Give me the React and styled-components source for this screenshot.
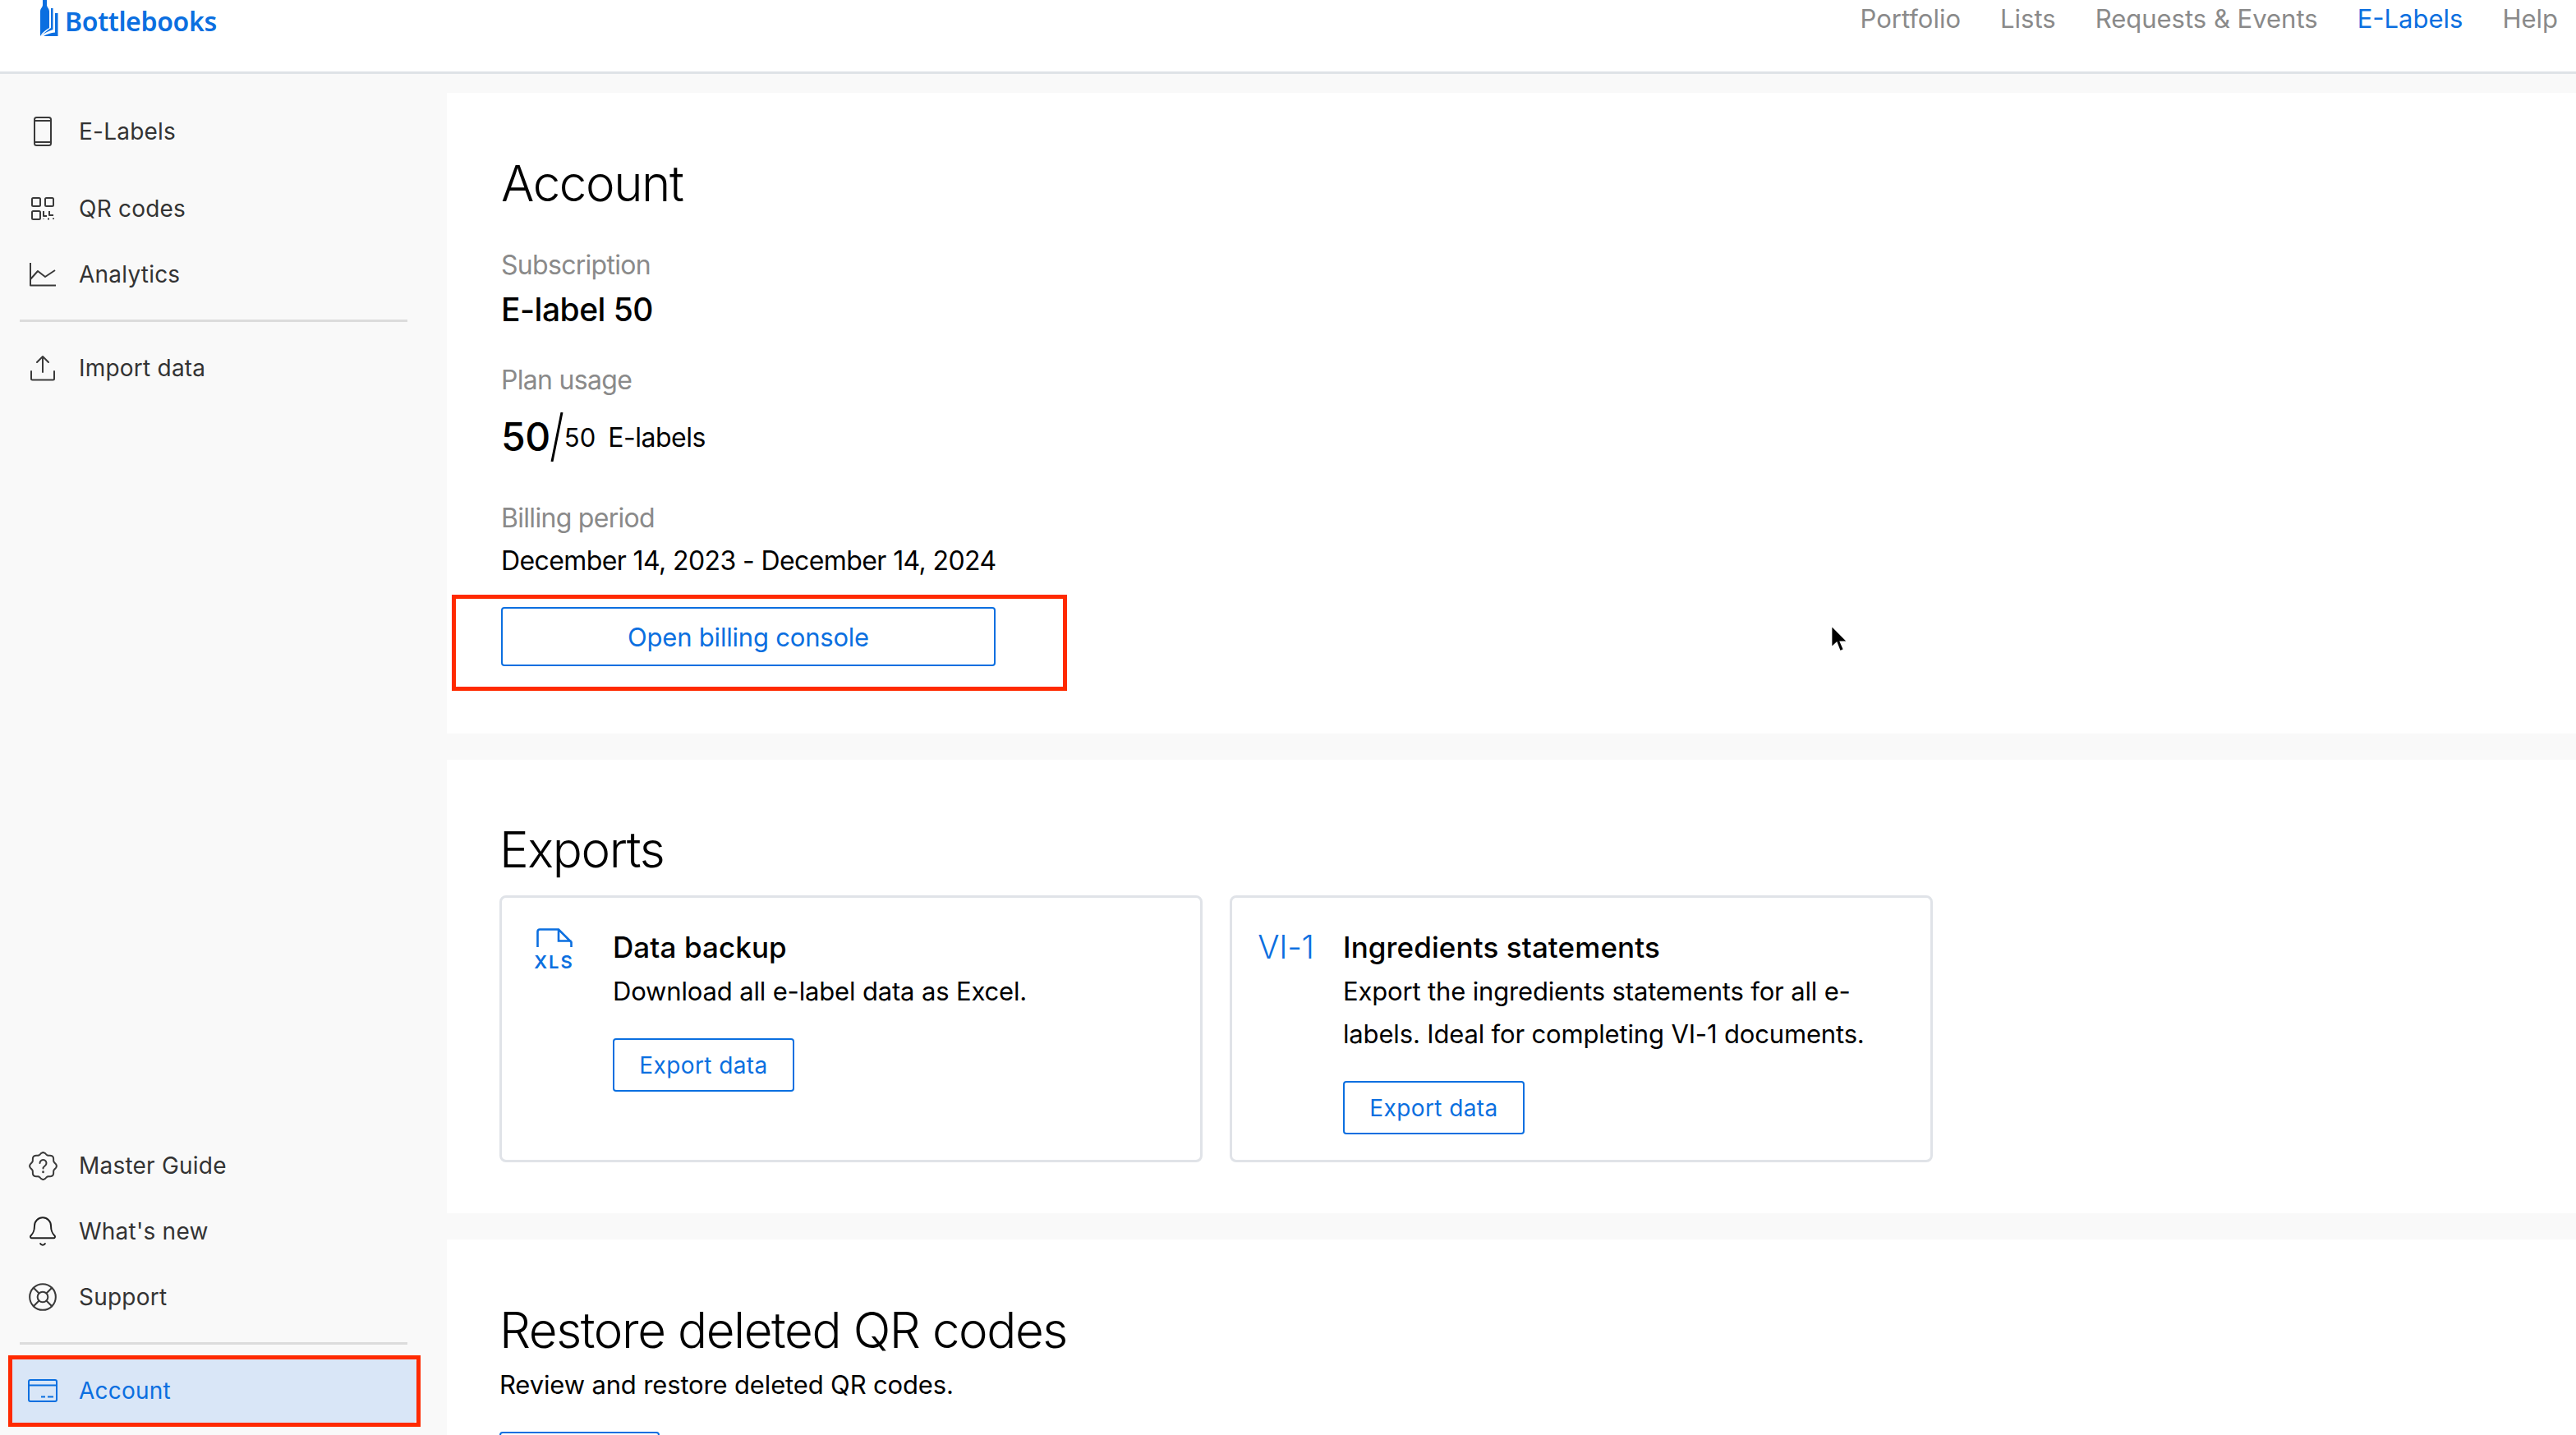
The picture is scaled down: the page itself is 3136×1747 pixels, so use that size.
import React from "react";
import styled, { createGlobalStyle } from "styled-components";
import { Bell, LifeBuoy } from "lucide-react";

const Global = createGlobalStyle`
  html, body { margin: 0; padding: 0; background: #f9f9f9; }
  body { font-family: Inter, "Liberation Sans", sans-serif; overflow: hidden; color: #000; }
  * { box-sizing: border-box; }
`;

const Page = styled.div`
  position: relative;
  width: 3136px;
  height: 1747px;
  overflow: hidden;
  display: flex;
  flex-direction: column;
`;
const Header = styled.header`
  height: 90px;
  flex: none;
  background: #fff;
  border-bottom: 3px solid #dfe3e7;
  display: flex;
  justify-content: space-between;
  align-items: flex-start;
  padding: 0 22px 0 49px;
`;
const Brand = styled.div`
  display: flex;
  align-items: flex-start;
  gap: 8px;
`;
const BrandName = styled.span`
  font-family: "Noto Sans", sans-serif;
  font-weight: 600;
  font-size: 32px;
  line-height: 52px;
  color: #0b6fe0;
  letter-spacing: -0.35px;
`;
const TopNav = styled.nav`
  display: flex;
  gap: 48px;
`;
const TopLink = styled.a`
  font-size: 31px;
  line-height: 46px;
  font-weight: 400;
  letter-spacing: 0;
  color: ${(p) => (p.$active ? "#0b6fe0" : "#8a8a8a")};
`;
const Body = styled.div`
  flex: 1;
  display: flex;
  min-height: 0;
`;
const Sidebar = styled.aside`
  width: 544px;
  flex: none;
  padding: 30px 36px 14px 12px;
  display: flex;
  flex-direction: column;
  justify-content: space-between;
`;
const NavGroup = styled.div`
  display: flex;
  flex-direction: column;
`;
const NavItem = styled.a`
  height: 80px;
  margin-bottom: ${(p) => p.$mb || 0}px;
  display: flex;
  align-items: center;
  gap: 27px;
  padding-left: 23px;
  font-size: 28px;
  letter-spacing: 0.22px;
  color: ${(p) => (p.$active ? "#0b6fe0" : "#333")};
  background: ${(p) => (p.$active ? "#d9e6f7" : "transparent")};
  border-radius: ${(p) => (p.$active ? "8px" : "0")};
`;
const IconBox = styled.span`
  width: 34px;
  height: 34px;
  flex: none;
  display: flex;
  align-items: center;
  justify-content: center;
  svg { display: block; flex: none; }
`;
const Divider = styled.hr`
  border: 0;
  height: 3px;
  background: #dcdcdc;
  margin: 15px 0 16px 12px;
  width: 472px;
  flex: none;
`;
const Main = styled.main`
  flex: 1;
  padding-top: 23px;
  display: flex;
  flex-direction: column;
  gap: 32px;
  min-width: 0;
`;
const Panel = styled.section`
  background: #fff;
  flex: none;
  height: ${(p) => p.$h}px;
  padding: ${(p) => p.$pt}px 0 0 ${(p) => p.$pl}px;
`;
const Title = styled.h2`
  margin: 0;
  font-weight: 300;
  font-size: 60px;
  line-height: 76px;
  letter-spacing: -1.4px;
  color: #000;
`;
const Label = styled.div`
  font-size: 32px;
  line-height: 40px;
  color: #8a8a8a;
  letter-spacing: -0.7px;
  margin-top: ${(p) => p.$mt}px;
`;
const PlanName = styled.div`
  font-size: 39px;
  line-height: 48px;
  font-weight: 500;
  margin-top: 10px;
  letter-spacing: -0.5px;
`;
const Usage = styled.div`
  display: flex;
  align-items: center;
  height: 72px;
  margin-top: 13px;
`;
const UsageBig = styled.span`
  font-size: 48px;
  font-weight: 500;
  line-height: 72px;
  letter-spacing: -0.4px;
`;
const Slash = styled.svg`
  margin: 0 0 0 -1px;
`;
const UsageSmall = styled.span`
  font-size: 31px;
  margin-left: 0;
`;
const UsageUnit = styled.span`
  font-size: 32px;
  margin-left: 15px;
  letter-spacing: -0.5px;
`;
const DateLine = styled.div`
  font-size: 32px;
  line-height: 40px;
  margin-top: 12px;
  letter-spacing: -0.6px;
`;
const OutlineButton = styled.button`
  display: block;
  width: ${(p) => p.$w}px;
  height: ${(p) => p.$h}px;
  margin-top: ${(p) => p.$mt}px;
  padding: 0;
  background: #fff;
  border: 2px solid #0b6fe0;
  border-radius: 4px;
  color: #0b6fe0;
  font-family: inherit;
  font-size: ${(p) => p.$fs}px;
  letter-spacing: ${(p) => p.$ls || 0}px;
`;
const CardRow = styled.div`
  display: flex;
  gap: 33px;
  margin-top: 18px;
`;
const ExportCard = styled.article`
  width: 856px;
  height: 325px;
  border: 3px solid #e0e3e8;
  border-radius: 8px;
  display: grid;
  grid-template-columns: 135px 1fr;
  padding: 37px 60px 0 0;
`;
const CardIcon = styled.div`
  display: flex;
  flex-direction: column;
  align-items: center;
  padding-right: ${(p) => p.$pr || 0}px;
`;
const XlsText = styled.span`
  font-size: 22px;
  line-height: 20px;
  font-weight: 600;
  letter-spacing: 2px;
  color: #0b6fe0;
  margin-top: 8px;
`;
const ViText = styled.span`
  font-size: 39px;
  line-height: 46px;
  font-weight: 300;
  letter-spacing: -0.3px;
  color: #0b6fe0;
`;
const CardTitle = styled.h3`
  margin: 0;
  font-size: 35px;
  font-weight: 500;
  line-height: 46px;
  letter-spacing: 0.1px;
`;
const CardText = styled.p`
  margin: 5px 0 0;
  font-size: 31px;
  line-height: 52px;
  letter-spacing: -0.16px;
`;
const RestoreText = styled.p`
  margin: 9px 0 0;
  font-size: 31px;
  line-height: 40px;
  letter-spacing: -0.15px;
`;
const Annotation = styled.div`
  position: absolute;
  left: ${(p) => p.$x}px;
  top: ${(p) => p.$y}px;
  width: ${(p) => p.$w}px;
  height: ${(p) => p.$h}px;
  border: 5px solid #ff2a00;
  pointer-events: none;
`;
const Cursor = styled.svg`
  position: absolute;
  left: 2226px;
  top: 758px;
`;

const Logo = () => (
  <svg width="22" height="44" viewBox="0 0 22 44" fill="#0b6fe0">
    <path d="M0 44V14C0 10 3 9 3 6V0H8V6C8 9 11 10 11 14V34C7 36 3 39 0 44Z" />
    <path d="M13 10H15.500V36C10 38 5 40 1 44C4 41 8 37 13 34Z" />
    <path d="M18 16H21.500V44H4C8 41.500 13 40 18 39.500Z" />
  </svg>
);
const S = { fill: "none", stroke: "#3a3a3a", strokeWidth: 2, strokeLinecap: "round", strokeLinejoin: "round" };
const PhoneIcon = () => (
  <svg width="34" height="36" viewBox="0 0 34 36" {...S}>
    <rect x="7" y="1" width="20" height="34" rx="2.500" />
    <path d="M7 5h20M7 31h20" />
  </svg>
);
const QrIcon = () => (
  <svg width="30" height="30" viewBox="0 0 30 30" {...S}>
    <rect x="2" y="2" width="10" height="10" rx="1.500" />
    <rect x="18" y="2" width="10" height="10" rx="1.500" />
    <rect x="2" y="18" width="10" height="10" rx="1.500" />
    <path d="M16 18v6h4M16 27.500v.5M23 18v5h5M21 27.500h2M28 26.500v1.500" strokeLinecap="butt" />
  </svg>
);
const ChartIcon = () => (
  <svg width="34" height="30" viewBox="0 0 34 30" {...S} strokeLinecap="butt">
    <path d="M2 1V28.500H33" />
    <path d="M2 21L11 11L20 18L32 10" />
  </svg>
);
const UploadIcon = () => (
  <svg width="32" height="32" viewBox="0 0 32 32" {...S}>
    <path d="M16 21V3M9 9l7-7 7 7" />
    <path d="M2 20v9a1.500 1.500 0 0 0 1.500 1.500h25A1.500 1.500 0 0 0 30 29v-9" />
  </svg>
);
const scallop = Array.from({ length: 97 }, (_, i) => {
  const a = (i / 96) * Math.PI * 2;
  const r = 15.2 + 1.2 * Math.cos(8 * a);
  return `${i ? "L" : "M"}${(17.5 + r * Math.sin(a)).toFixed(2)} ${(17.5 - r * Math.cos(a)).toFixed(2)}`;
}).join("");
const GuideIcon = () => (
  <svg width="35" height="35" viewBox="0 0 35 35" {...S}>
    <path d={scallop} />
    <path d="M13.500 14a4 4 0 1 1 6.300 3.300C18.300 18.400 17.500 19 17.500 20.500" />
    <path d="M17.500 24.500v.5" strokeWidth="2.600" />
  </svg>
);
const CardSvg = () => (
  <svg width="36" height="28" viewBox="0 0 36 28" fill="none" stroke="#0b6fe0" strokeWidth="2" strokeLinecap="butt">
    <rect x="1" y="1" width="34" height="26" rx="2" />
    <path d="M1 7.500h34M16 21.500h5M24 21.500h7" />
  </svg>
);

const FileIcon = () => (
  <svg width="44" height="23" viewBox="0 0 44 23" fill="none" stroke="#0b6fe0" strokeWidth="2.600">
    <path d="M1.500 23V4a2.500 2.500 0 0 1 2.500-2.500H27L42.500 17V23M27 1.500V15.500H42.500" />
  </svg>
);

const topLinks = ["Portfolio", "Lists", "Requests & Events", "E-Labels", "Help"];

export default function App() {
  return (
    <Page>
      <Global />
      <Header>
        <Brand>
          <Logo />
          <BrandName>Bottlebooks</BrandName>
        </Brand>
        <TopNav>
          {topLinks.map((l) => (
            <TopLink key={l} $active={l === "E-Labels"}>{l}</TopLink>
          ))}
        </TopNav>
      </Header>
      <Body>
        <Sidebar>
          <NavGroup>
            <NavItem $mb={14}><IconBox><PhoneIcon /></IconBox>E-Labels</NavItem>
            <NavItem><IconBox><QrIcon /></IconBox>QR codes</NavItem>
            <NavItem><IconBox><ChartIcon /></IconBox>Analytics</NavItem>
            <Divider />
            <NavItem><IconBox><UploadIcon /></IconBox>Import data</NavItem>
          </NavGroup>
          <NavGroup>
            <NavItem><IconBox><GuideIcon /></IconBox>Master Guide</NavItem>
            <NavItem><IconBox><Bell size={40} color="#222" strokeWidth={1.2} /></IconBox>What's new</NavItem>
            <NavItem><IconBox><LifeBuoy size={38} color="#3a3a3a" strokeWidth={1.3} /></IconBox>Support</NavItem>
            <Divider />
            <NavItem $active><IconBox><CardSvg /></IconBox>Account</NavItem>
          </NavGroup>
        </Sidebar>
        <Main>
          <Panel $h={780} $pt={72} $pl={66}>
            <Title>Account</Title>
            <Label $mt={42}>Subscription</Label>
            <PlanName>E-label 50</PlanName>
            <Label $mt={42}>Plan usage</Label>
            <Usage>
              <UsageBig>50</UsageBig>
              <Slash width="18" height="60" viewBox="0 0 18 60">
                <path d="M15 0L3 60" stroke="#000" strokeWidth="3" fill="none" />
              </Slash>
              <UsageSmall>50</UsageSmall>
              <UsageUnit>E-labels</UsageUnit>
            </Usage>
            <Label $mt={43}>Billing period</Label>
            <DateLine>December 14, 2023 - December 14, 2024</DateLine>
            <OutlineButton $w={602} $h={72} $mt={36} $fs={31} $ls={-0.2}>Open billing console</OutlineButton>
          </Panel>
          <Panel $h={552} $pt={71} $pl={64}>
            <Title>Exports</Title>
            <CardRow>
              <ExportCard>
                <CardIcon $pr={8}>
                  <FileIcon />
                  <XlsText>XLS</XlsText>
                </CardIcon>
                <div>
                  <CardTitle>Data backup</CardTitle>
                  <CardText>Download all e-label data as Excel.</CardText>
                  <OutlineButton $w={221} $h={65} $mt={31} $fs={28} $ls={0.4}>Export data</OutlineButton>
                </div>
              </ExportCard>
              <ExportCard>
                <CardIcon $pr={4}>
                  <ViText>VI-1</ViText>
                </CardIcon>
                <div>
                  <CardTitle>Ingredients statements</CardTitle>
                  <CardText>Export the ingredients statements for all e-labels. Ideal for completing VI-1 documents.</CardText>
                  <OutlineButton $w={221} $h={65} $mt={31} $fs={28} $ls={0.4}>Export data</OutlineButton>
                </div>
              </ExportCard>
            </CardRow>
          </Panel>
          <Panel $h={300} $pt={72} $pl={64}>
            <Title>Restore deleted QR codes</Title>
            <RestoreText>Review and restore deleted QR codes.</RestoreText>
            <OutlineButton $w={195} $h={65} $mt={37} $fs={28} />
          </Panel>
        </Main>
      </Body>
      <Annotation $x={550} $y={724} $w={749} $h={117} />
      <Annotation $x={10} $y={1650} $w={502} $h={87} />
      <Cursor width="28" height="42" viewBox="0 0 24 36">
        <path d="M3 3V26L8.500 21L12 30L16 28L12.500 20H20Z" fill="#000" stroke="#fff" strokeWidth="1.500" />
      </Cursor>
    </Page>
  );
}
